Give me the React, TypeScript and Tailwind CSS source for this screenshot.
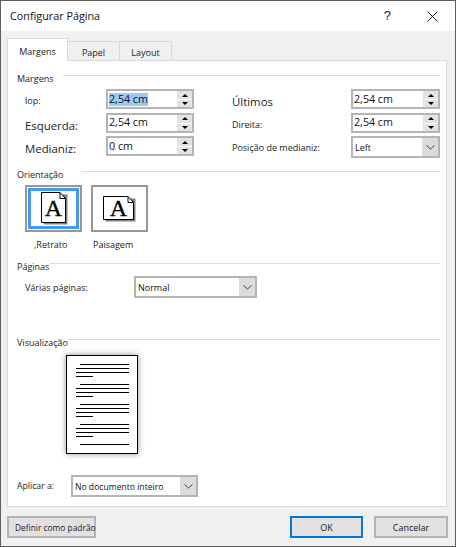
import type { ReactNode } from 'react';

const SpinInput = ({ value, selected }: { value: string; selected?: boolean }) => (
    <div className="flex h-[20px] w-full items-center justify-between border-2 border-[#b4b4b4] bg-white pl-[1px] text-[10.7px] text-[#111]">
        <span className={selected ? 'bg-[#99c9f5] leading-[13px]' : 'leading-[13px]'}>{value}</span>
        <div className="flex h-[16px] w-[15px] flex-col justify-between">
            <div className="flex h-[8px] items-center justify-center bg-[#e3e3e3]">
                <div className="h-0 w-0 border-x-[3px] border-b-[3px] border-x-transparent border-b-black" />
            </div>
            <div className="flex h-[7px] items-center justify-center bg-[#e3e3e3]">
                <div className="h-0 w-0 border-x-[3px] border-t-[3px] border-x-transparent border-t-black" />
            </div>
        </div>
    </div>
);

const Select = ({ value, className, small }: { value: string; className: string; small?: boolean }) => (
    <div className={`flex h-[22px] items-stretch border-2 border-[#b4b4b4] bg-white text-[#111] ${small ? 'text-[8.6px]' : 'text-[9px]'} ${className}`}>
        <span className="flex-1 self-center pl-[2px] pt-[2px]">{value}</span>
        <div className="flex w-[16px] items-center justify-center bg-[#dcdcdc]">
            <svg width="9" height="5" viewBox="0 0 9 5" fill="none" stroke="#444" strokeWidth="1">
                <path d="M0.5 0.5 L4.5 4 L8.5 0.5" />
            </svg>
        </div>
    </div>
);

const SectionHead = ({ label, width }: { label: string; width: string }) => (
    <div className="flex h-[12px] items-start">
        <span className={`${width} shrink-0 pt-[1px] text-[9px] leading-[12px] text-[#222]`}>{label}</span>
        <div className="mt-[3px] h-px flex-1 bg-[#dcdcdc]" />
    </div>
);

const Label = ({ children, big }: { children: ReactNode; big?: boolean }) => (
    <span className={big ? 'pt-[3px] text-[11.4px] leading-[20px] text-[#222]' : 'pt-[2px] text-[9px] leading-[20px] text-[#222]'}>{children}</span>
);

const PageIcon = ({ landscape }: { landscape?: boolean }) => {
    const w = landscape ? 31 : 25;
    const h = landscape ? 24 : 31;
    return (
        <svg className={landscape ? '' : 'ml-[2px]'} width={w + 2} height={h + 2} viewBox={`0 0 ${w + 2} ${h + 2}`}>
            <path d={`M2.5 2.5 H${w + 1.5} V${h + 1.5} H2.5 Z`} fill="#808080" />
            <path d={`M0.5 0.5 H${w - 6} L${w - 0.5} 6.5 V${h - 0.5} H0.5 Z`} fill="#fff" stroke="#000" />
            <path d={`M${w - 6} 0.5 V6.5 H${w - 0.5}`} fill="none" stroke="#000" />
            <text x={w / 2} y={h / 2 + 8} textAnchor="middle" fontFamily="'Liberation Serif', serif" fontWeight="400" fontSize="24" stroke="#000" strokeWidth="0.3" fill="#000">A</text>
        </svg>
    );
};

const Line = ({ w, indent }: { w: string; indent?: boolean }) => (
    <div className={`h-px bg-black ${w} ${indent ? 'ml-[13px]' : 'ml-[9px]'}`} />
);

const TextBlock = () => (
    <div className="flex flex-col gap-[3px]">
        <Line w="w-[49px]" indent />
        <Line w="w-[53px]" />
        <Line w="w-[53px]" />
        <Line w="w-[17px]" />
    </div>
);

const PagePreview = () => (
    <div className="ml-[49px] mt-[7px] flex h-[99px] w-[72px] flex-col gap-[7px] border border-black bg-white pt-[8px] shadow-[0_0_6px_rgba(0,0,0,0.45)]">
        <TextBlock />
        <TextBlock />
        <TextBlock />
        <TextBlock />
        <Line w="w-[49px]" indent />
    </div>
);

export default function App() {
    return (
        <div className="flex h-[547px] w-[456px] flex-col overflow-hidden border border-[#5f5f5f] bg-[#f0f0f0] font-['Open_Sans','Liberation_Sans',sans-serif]">
            <div className="flex h-[30px] items-center justify-between bg-white pl-[9px]">
                <span className="text-[10.8px] text-[#111]">Configurar Página</span>
                <div className="flex items-center">
                    <span className="mr-[36px] font-['Liberation_Sans',sans-serif] text-[13px] text-[#222]">?</span>
                    <svg className="mr-[17px]" width="11" height="11" viewBox="0 0 11 11" stroke="#222" strokeWidth="1" fill="none">
                        <path d="M0.5 0.5 L10.5 10.5 M10.5 0.5 L0.5 10.5" />
                    </svg>
                </div>
            </div>

            <div className="mt-[7px] flex h-[22px] items-end pl-[6px] text-[9px] text-[#222]">
                <div className="relative z-10 -mb-px flex h-[23px] w-[61px] items-center justify-center border border-b-0 border-[#d9d9d9] bg-white pt-[3px]">Margens</div>
                <div className="flex h-[19px] w-[52px] items-center justify-center border border-b-0 border-l-0 border-[#d9d9d9] pt-[3px]">Papel</div>
                <div className="flex h-[19px] w-[52px] items-center justify-center border border-b-0 border-l-0 border-[#d9d9d9] pt-[3px]">Layout</div>
            </div>

            <div className="ml-[6px] mr-[8px] flex h-[447px] flex-col border border-[#d9d9d9] bg-white pl-[9px] pr-[6px] pt-[11px]">
                <SectionHead label="Margens" width="w-[46px]" />

                <div className="ml-[8px] mt-[5px] grid grid-cols-[81px_88px_38px_119px_89px] grid-rows-[20px_20px_20px] gap-y-[3.5px]">
                    <Label>lop:</Label>
                    <SpinInput value="2,54 cm" selected />
                    <span />
                    <Label big>Últimos</Label>
                    <SpinInput value="2,54 cm" />
                    <Label big>Esquerda:</Label>
                    <SpinInput value="2,54 cm" />
                    <span />
                    <Label>Direita:</Label>
                    <SpinInput value="2,54 cm" />
                    <Label big>Medianiz:</Label>
                    <SpinInput value="0 cm" />
                    <span />
                    <Label>Posição de medianiz:</Label>
                    <Select value="Left" className="w-[89px]" />
                </div>

                <div className="mt-[12px]">
                    <SectionHead label="Orientação" width="w-[64px]" />
                </div>
                <div className="ml-[8px] mt-[5px] flex gap-[9px]">
                    <div className="flex w-[57px] flex-col">
                        <div className="flex h-[47px] w-[57px] items-center justify-center border-2 border-[#979797] p-[1px]">
                            <div className="flex h-full w-full items-center justify-center border-[3px] border-[#3f9bf5]">
                                <PageIcon />
                            </div>
                        </div>
                        <span className="ml-[9px] mt-[6px] pt-[1px] text-[9px] leading-[12px] text-[#222]">,Retrato</span>
                    </div>
                    <div className="flex w-[57px] flex-col">
                        <div className="flex h-[47px] w-[57px] items-center justify-center border-2 border-[#979797]">
                            <PageIcon landscape />
                        </div>
                        <span className="ml-[2px] mt-[6px] pt-[1px] text-[9px] leading-[12px] text-[#222]">Paisagem</span>
                    </div>
                </div>

                <div className="mt-[9px]">
                    <SectionHead label="Páginas" width="w-[33px]" />
                </div>
                <div className="ml-[8px] mt-[4px] flex h-[22px] items-center">
                    <span className="w-[109px] pt-[2px] text-[9px] text-[#222]">Várias páginas:</span>
                    <Select value="Normal" className="w-[123px]" />
                </div>

                <div className="mt-[38px]">
                    <SectionHead label="Visualização" width="w-[51px]" />
                </div>
                <PagePreview />

                <div className="mt-[21px] flex h-[22px] items-center">
                    <span className="w-[54px] pt-[2px] text-[8.7px] text-[#222]">Aplicar a:</span>
                    <Select value="No documento inteiro" className="w-[127px]" small />
                </div>
            </div>

            <div className="mt-[9px] flex pl-[6px] pr-[7px] text-[9px] text-[#222]">
                <div className="flex h-[22px] w-[89px] items-center whitespace-nowrap border-2 border-[#b4b4b4] bg-[#e1e1e1] pl-[6px] pt-[2px] text-[8.4px]">Definir como padrão</div>
                <div className="ml-auto flex h-[22px] w-[73px] items-center justify-center border-2 border-[#0078d7] bg-[#e1e1e1] pt-[2px]">OK</div>
                <div className="ml-[11px] flex h-[22px] w-[74px] items-center justify-center border-2 border-[#b4b4b4] bg-[#e1e1e1] pt-[2px]">Cancelar</div>
            </div>
        </div>
    );
}
